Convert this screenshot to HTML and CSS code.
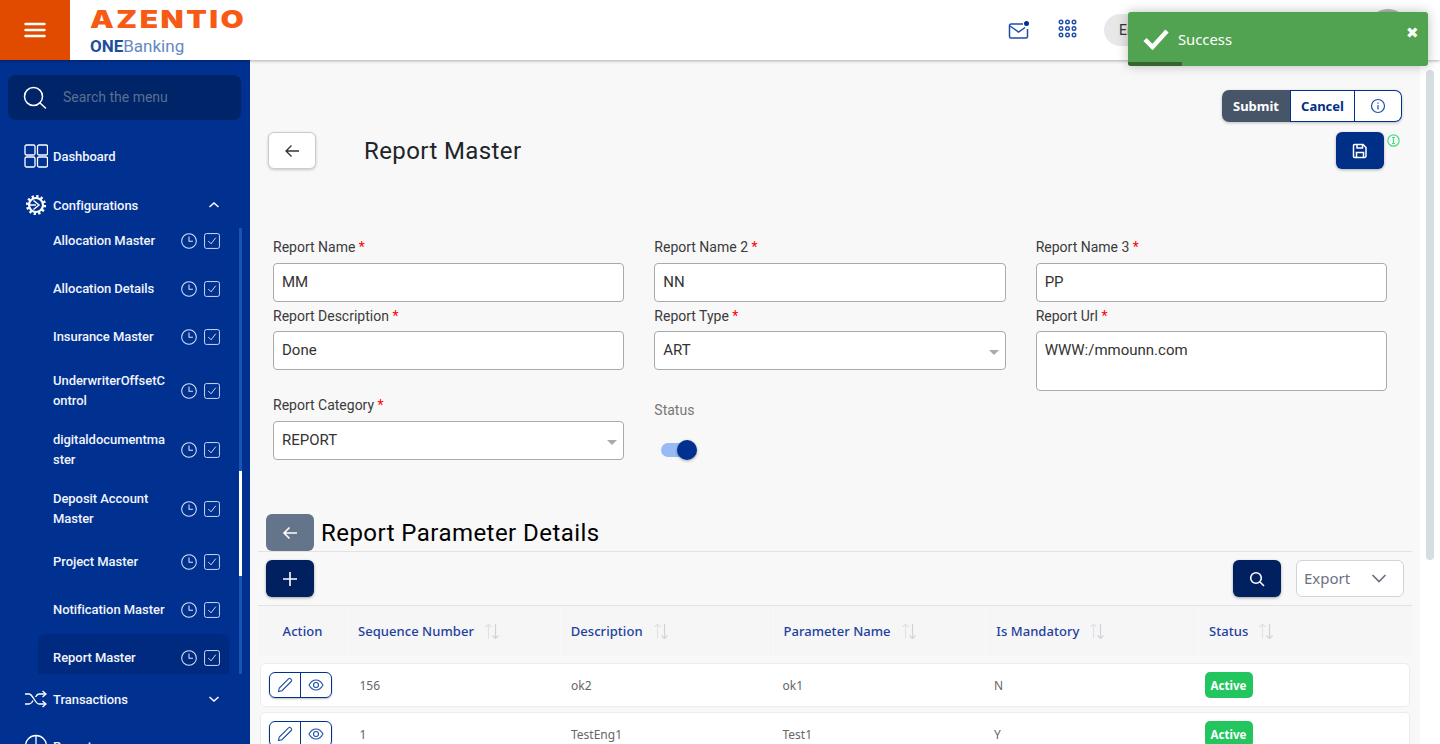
FILE: index.html
```html
<!DOCTYPE html>
<html lang="en">
<head>
  <meta charset="UTF-8">
  <meta name="viewport" content="width=device-width, initial-scale=1.0">
  <title>Report Master</title>
  <link rel="stylesheet" href="styles.css">
</head>
<body>
<header class="topbar">
  <button class="menu-btn">
    <svg width="22" height="16" viewBox="0 0 22 16" fill="none" stroke="#fff" stroke-width="2.4" stroke-linecap="round"><path d="M1.5 2h19M1.5 8h19M1.5 14h19"/></svg>
  </button>
  <div class="logo">
    <div class="logo-main">AZENTIO</div>
    <div class="logo-sub"><b>ONE</b>Banking</div>
  </div>
  <div class="top-right">
    <svg class="mail-icon" width="22" height="20" viewBox="0 0 22 20" fill="none" stroke="#1e4ea8" stroke-width="1.5"><path d="M15 4H3a1.5 1.5 0 0 0-1.5 1.5v11A1.5 1.5 0 0 0 3 18h15a1.5 1.5 0 0 0 1.5-1.5V9"/><path d="M2 6l8.500 6L17 7.500"/><circle cx="18.500" cy="3.500" r="2.500" fill="#003090" stroke="none"/></svg>
    <svg class="apps-icon" width="19" height="19" viewBox="0 0 19 19" fill="none" stroke="#1e4ea8" stroke-width="1.4"><circle cx="3" cy="3" r="1.800"/><circle cx="9.500" cy="3" r="1.800"/><circle cx="16" cy="3" r="1.800"/><circle cx="3" cy="9.500" r="1.800"/><circle cx="9.500" cy="9.500" r="1.800"/><circle cx="16" cy="9.500" r="1.800"/><circle cx="3" cy="16" r="1.800"/><circle cx="9.500" cy="16" r="1.800"/><circle cx="16" cy="16" r="1.800"/></svg>
    <div class="lang-pill">English</div>
    <div class="avatar"></div>
  </div>
</header>

<div class="toast">
  <svg width="26" height="22" viewBox="0 0 26 22" fill="none" stroke="#fff" stroke-width="4.500"><path d="M2 11.500l7.500 7.500L24 3"/></svg>
  <span class="toast-text">Success</span>
  <span class="toast-close">&#10006;</span>
  <div class="toast-progress"></div>
</div>

<div class="layout">
  <aside class="sidebar">
    <div class="menu-search">
      <svg width="24" height="24" viewBox="0 0 24 24" fill="none" stroke="#fff" stroke-width="1.500" stroke-linecap="round"><circle cx="10.500" cy="10.500" r="9"/><path d="M17 17l5.500 5"/></svg>
      <span>Search the menu</span>
    </div>

    <a class="nav-item nav-dashboard">
      <svg width="24" height="24" viewBox="0 0 24 24" fill="none" stroke="#fff" stroke-width="1.300"><rect x="1" y="1" width="10" height="10" rx="1.500"/><rect x="13.500" y="1" width="10" height="10" rx="1.500"/><rect x="1" y="13" width="10" height="10" rx="1.500"/><rect x="13.500" y="13" width="10" height="10" rx="1.500"/></svg>
      <span>Dashboard</span>
    </a>
    <a class="nav-item nav-config">
      <svg width="24" height="24" viewBox="0 0 24 24" fill="none" stroke="#fff"><circle cx="12" cy="12" r="7" stroke-width="2.200"/><circle cx="12" cy="12" r="8.800" stroke-width="2.600" stroke-dasharray="2.300 2.300"/><path d="M9.500 7.500l5.500 4.500-5.500 4.500M12 12H6" stroke-width="1.500"/></svg>
      <span>Configurations</span>
      <svg class="chev" width="12" height="8" viewBox="0 0 12 8" fill="none" stroke="#fff" stroke-width="1.500"><path d="M1.500 6L6 2l4.500 4"/></svg>
    </a>

    <div class="submenu">
      <ul class="submenu-list">
        <li class="sub-item"><span class="sub-name">Allocation Master</span><svg class="clock"><use href="#clock"/></svg><svg class="tick"><use href="#tick"/></svg></li>
        <li class="sub-item"><span class="sub-name">Allocation Details</span><svg class="clock"><use href="#clock"/></svg><svg class="tick"><use href="#tick"/></svg></li>
        <li class="sub-item"><span class="sub-name">Insurance Master</span><svg class="clock"><use href="#clock"/></svg><svg class="tick"><use href="#tick"/></svg></li>
        <li class="sub-item tall"><span class="sub-name">UnderwriterOffsetControl</span><svg class="clock"><use href="#clock"/></svg><svg class="tick"><use href="#tick"/></svg></li>
        <li class="sub-item tall"><span class="sub-name">digitaldocumentmaster</span><svg class="clock"><use href="#clock"/></svg><svg class="tick"><use href="#tick"/></svg></li>
        <li class="sub-item tall"><span class="sub-name keep">Deposit Account Master</span><svg class="clock"><use href="#clock"/></svg><svg class="tick"><use href="#tick"/></svg></li>
        <li class="sub-item"><span class="sub-name">Project Master</span><svg class="clock"><use href="#clock"/></svg><svg class="tick"><use href="#tick"/></svg></li>
        <li class="sub-item"><span class="sub-name">Notification Master</span><svg class="clock"><use href="#clock"/></svg><svg class="tick"><use href="#tick"/></svg></li>
        <li class="sub-item active"><span class="sub-name">Report Master</span><svg class="clock"><use href="#clock"/></svg><svg class="tick"><use href="#tick"/></svg></li>
      </ul>
      <div class="sub-scroll"><div class="sub-thumb"></div></div>
    </div>

    <a class="nav-item nav-trans">
      <svg width="24" height="18" viewBox="0 0 24 18" fill="none" stroke="#fff" stroke-width="1.300"><path d="M1 4h4c4 0 6 10 10 10h6M1 14h4c1.800 0 3-1.600 4.200-3.500M11.500 7C12.500 5.300 13.500 4 15 4h6"/><path d="M18.500 1L22 4l-3.500 3M18.500 11l3.500 3-3.500 3"/></svg>
      <span>Transactions</span>
      <svg class="chev" width="12" height="8" viewBox="0 0 12 8" fill="none" stroke="#fff" stroke-width="1.500"><path d="M1.500 2L6 6l4.500-4"/></svg>
    </a>
    <a class="nav-item nav-reports">
      <svg width="24" height="24" viewBox="0 0 24 24" fill="none" stroke="#fff" stroke-width="1.300"><circle cx="12" cy="12" r="10.500"/><path d="M12 1.500V12H2M12 12h10"/></svg>
      <span>Reports</span>
    </a>
  </aside>

  <main class="content">
    <div class="action-group-row">
      <div class="action-group">
        <button class="btn-submit">Submit</button>
        <button class="btn-cancel">Cancel</button>
        <button class="btn-info">
          <svg width="16" height="16" viewBox="0 0 16 16" fill="none" stroke="#1e4ea8" stroke-width="1.200"><circle cx="8" cy="8" r="6.500"/><path d="M8 7v4.500M8 4.500v1.200"/></svg>
        </button>
      </div>
    </div>

    <div class="page-head">
      <button class="back-btn">
        <svg width="16" height="14" viewBox="0 0 16 14" fill="none" stroke="#333" stroke-width="1.300"><path d="M15 7H2M7.500 1.500L2 7l5.500 5.500"/></svg>
      </button>
      <h1 class="page-title">Report Master</h1>
      <button class="save-btn">
        <svg width="16" height="16" viewBox="0 0 16 16" fill="none" stroke="#fff" stroke-width="1.500"><path d="M2.500 1.500h8.500l3 3v8.500a1.500 1.500 0 0 1-1.500 1.500h-10a1 1 0 0 1-1-1V2.500a1 1 0 0 1 1-1z"/><path d="M5 1.500v3.500h5.500V1.500M4.500 14.500V9.500h7v5"/></svg>
      </button>
      <svg class="save-hint" width="13" height="13" viewBox="0 0 13 13" fill="none" stroke="#4ade80" stroke-width="1.200"><circle cx="6.500" cy="6.500" r="5.700"/><path d="M6.500 3.500v6M5 3.500h3M5 9.500h3"/></svg>
    </div>

    <form class="report-form">
      <div class="field">
        <label>Report Name <i>*</i></label>
        <input class="text-input" value="MM">
      </div>
      <div class="field">
        <label>Report Name 2 <i>*</i></label>
        <input class="text-input" value="NN">
      </div>
      <div class="field">
        <label>Report Name 3 <i>*</i></label>
        <input class="text-input" value="PP">
      </div>
      <div class="field tight">
        <label>Report Description <i>*</i></label>
        <input class="text-input" value="Done">
      </div>
      <div class="field tight">
        <label>Report Type <i>*</i></label>
        <div class="select-box">ART<span class="caret"></span></div>
      </div>
      <div class="field tight">
        <label>Report Url <i>*</i></label>
        <textarea class="text-input url-input">WWW:/mmounn.com</textarea>
      </div>
      <div class="field">
        <label>Report Category <i>*</i></label>
        <div class="select-box">REPORT<span class="caret"></span></div>
      </div>
      <div class="field status-field">
        <label>Status</label>
        <div class="toggle"><span class="toggle-knob"></span></div>
      </div>
    </form>

    <section class="param-section">
      <div class="section-head">
        <button class="section-back">
          <svg width="16" height="14" viewBox="0 0 16 14" fill="none" stroke="#fff" stroke-width="1.600"><path d="M15 7H2M7.500 1.500L2 7l5.500 5.500"/></svg>
        </button>
        <h2 class="section-title">Report Parameter Details</h2>
      </div>
      <div class="toolbar">
        <button class="navy-btn">
          <svg width="14" height="14" viewBox="0 0 14 14" fill="none" stroke="#fff" stroke-width="1.600"><path d="M7 0v14M0 7h14"/></svg>
        </button>
        <button class="navy-btn search-btn">
          <svg width="16" height="16" viewBox="0 0 16 16" fill="none" stroke="#fff" stroke-width="1.600"><circle cx="7" cy="7" r="5.300"/><path d="M11 11l4 4"/></svg>
        </button>
        <div class="export-select"><span>Export</span>
          <svg width="16" height="9" viewBox="0 0 16 9" fill="none" stroke="#6b7280" stroke-width="1.700"><path d="M1.500 1L8 7.500 14.500 1"/></svg>
        </div>
      </div>

      <div class="table-head">
        <div class="th th-action">Action</div>
        <div class="th">Sequence Number<svg class="sort"><use href="#sort"/></svg></div>
        <div class="th">Description<svg class="sort"><use href="#sort"/></svg></div>
        <div class="th">Parameter Name<svg class="sort"><use href="#sort"/></svg></div>
        <div class="th">Is Mandatory<svg class="sort"><use href="#sort"/></svg></div>
        <div class="th">Status<svg class="sort"><use href="#sort"/></svg></div>
      </div>

      <div class="table-row">
        <div class="row-actions">
          <button><svg class="icon-pen"><use href="#pen"/></svg></button>
          <button><svg class="icon-eye"><use href="#eye"/></svg></button>
        </div>
        <div class="td">156</div>
        <div class="td">ok2</div>
        <div class="td">ok1</div>
        <div class="td">N</div>
        <div class="td"><span class="badge">Active</span></div>
      </div>
      <div class="table-row">
        <div class="row-actions">
          <button><svg class="icon-pen"><use href="#pen"/></svg></button>
          <button><svg class="icon-eye"><use href="#eye"/></svg></button>
        </div>
        <div class="td">1</div>
        <div class="td">TestEng1</div>
        <div class="td">Test1</div>
        <div class="td">Y</div>
        <div class="td"><span class="badge">Active</span></div>
      </div>
    </section>
  </main>

  <div class="page-scroll"><div class="page-thumb"></div></div>
</div>

<svg class="icon-defs" width="0" height="0">
  <symbol id="clock" viewBox="0 0 17 17"><g fill="none" stroke="#dbe4f5" stroke-width="1.100"><circle cx="8.500" cy="8.500" r="7.800"/><path d="M8.500 3.800v5h4.200"/></g></symbol>
  <symbol id="tick" viewBox="0 0 17 17"><g fill="none" stroke="#dbe4f5" stroke-width="1"><rect x=".6" y=".6" width="15.800" height="15.800" rx="2"/><path d="M4.500 8.500l3 3 5-6.500"/></g></symbol>
  <symbol id="sort" viewBox="0 0 16 16"><g fill="none" stroke-width="1.200"><path d="M4.500 15.500V1M1.500 4l3-3 3 3" stroke="#dfe3e8"/><path d="M11.500 1v14.500M8.500 12.500l3 3 3-3" stroke="#cfd4da"/></g></symbol>
  <symbol id="pen" viewBox="0 0 16 16"><g fill="none" stroke="#1e4ea8" stroke-width="1.100"><path d="M1.500 14.500l.8-3.500L11.500 1.800a1.500 1.500 0 0 1 2.200 0l.5.500a1.500 1.500 0 0 1 0 2.200L5 13.700z"/></g></symbol>
  <symbol id="eye" viewBox="0 0 16 12"><g fill="none" stroke="#1e4ea8" stroke-width="1.100"><path d="M1 6c1.800-3.200 4.200-5 7-5s5.200 1.800 7 5c-1.800 3.200-4.200 5-7 5S2.800 9.200 1 6z"/><circle cx="8" cy="6" r="2.500"/></g></symbol>
</svg>
</body>
</html>
```

FILE: styles.css
```css
* { margin: 0; padding: 0; box-sizing: border-box; }
html, body { height: 744px; overflow: hidden; }
body {
  font-family: Roboto, 'Noto Sans', sans-serif;
  background: #f8f8f8;
  color: #333;
}
button { border: none; background: none; font-family: inherit; cursor: pointer; }
ul { list-style: none; }
.icon-defs { position: absolute; }

/* top bar */
.topbar {
  display: flex;
  align-items: center;
  height: 60px;
  background: #fff;
  box-shadow: 0 1px 3px rgba(0, 0, 0, 0.3);
  position: relative;
  z-index: 2;
}
.menu-btn {
  width: 70px;
  height: 60px;
  background: #e04b00;
  display: flex;
  align-items: center;
  justify-content: center;
}
.logo { align-self: flex-start; margin: 8px 0 0 20px; width: 170px; }
.logo-main {
  font-family: Inter, sans-serif;
  font-weight: 900;
  font-size: 24px;
  line-height: 24px;
  letter-spacing: 2px;
  color: #f75a14;
  transform: scaleX(1.25);
  transform-origin: left center;
}
.logo-sub {
  font-size: 17px;
  line-height: 18px;
  margin-top: 5px;
  color: #6388c4;
}
.logo-sub b { color: #1d4e9e; font-weight: 700; }
.top-right {
  margin-left: auto;
  display: flex;
  align-items: center;
  padding-right: 31px;
}
.mail-icon { margin-right: 28px; }
.apps-icon { margin-right: 27px; margin-top: -4px; }
.lang-pill {
  width: 240px;
  height: 32px;
  border-radius: 16px;
  background: #e8e8e8;
  font-size: 14px;
  line-height: 32px;
  padding-left: 15px;
  margin-right: 23px;
}
.avatar {
  width: 42px;
  height: 42px;
  border-radius: 50%;
  background: #b5b5b5;
}

/* toast */
.toast {
  position: absolute;
  top: 12px;
  left: 1128px;
  width: 300px;
  height: 54px;
  z-index: 5;
  background: #51a351;
  border-radius: 3px;
  box-shadow: 0 0 12px rgba(0, 0, 0, 0.25);
  color: #fff;
  display: flex;
  align-items: center;
  padding: 0 0 0 15px;
  overflow: hidden;
}
.toast-text { font-family: 'Noto Sans', sans-serif; font-size: 14.800px; margin-left: 9px; }
.toast-close { position: absolute; top: 13px; right: 9px; font-size: 15px; line-height: 16px; }
.toast-progress {
  position: absolute;
  left: 0;
  bottom: 0;
  width: 54px;
  height: 4px;
  background: #35662f;
}

/* sidebar */
.layout { display: flex; height: 684px; position: relative; }
.sidebar {
  width: 250px;
  flex-shrink: 0;
  background: #003090;
  overflow: hidden;
  color: #fff;
  padding-top: 15px;
}
.menu-search {
  display: flex;
  align-items: center;
  height: 45px;
  margin: 0 9px 0 8px;
  padding-left: 15px;
  background: #002468;
  border-radius: 8px;
}
.menu-search span { margin: 0 0 2px 16px; font-size: 14px; color: #5c6f8f; }
.nav-item {
  display: flex;
  align-items: center;
  font-size: 13px;
  font-weight: 500;
  letter-spacing: -0.05px;
  color: #f1f4fb;
  padding-left: 24px;
}
.nav-item span { margin-left: 5px; }
.nav-item svg:first-child { width: 24px; flex-shrink: 0; }
.nav-item .chev { margin-left: auto; margin-right: 30px; }
.nav-dashboard { height: 24px; margin-top: 24px; }
.nav-config { height: 24px; margin-top: 25px; }
.nav-trans { height: 24px; margin-top: 13px; }
.nav-reports { height: 24px; margin-top: 23px; }
.submenu {
  position: relative;
  height: 446px;
  margin-top: 11px;
  overflow: hidden;
}
.submenu-list { margin-top: -11px; }
.sub-item {
  display: flex;
  align-items: center;
  width: 191px;
  height: 48px;
  margin-left: 38px;
  padding-left: 15px;
  border-radius: 8px;
  font-size: 13px;
  font-weight: 500;
  letter-spacing: -0.05px;
  line-height: 20px;
  color: #f1f4fb;
}
.sub-item.tall { height: 59px; }
.sub-item.active { background: #002a80; }
.sub-name { width: 115px; word-break: break-all; flex-shrink: 0; }
.sub-name.keep { word-break: normal; }
.clock { width: 16px; height: 16px; margin: 0 7px 0 13px; }
.tick { width: 16px; height: 16px; }
.sub-scroll {
  position: absolute;
  top: 0;
  bottom: 0;
  left: 239px;
  width: 3px;
  background: #1a52b5;
}
.sub-thumb { height: 105px; margin-top: 243px; background: #fff; }

/* main area */
.content { flex: 1; min-width: 0; height: 684px; overflow: hidden; }
.action-group-row { display: flex; justify-content: flex-end; padding: 30px 18px 0 0; }
.action-group {
  display: flex;
  height: 32px;
  border-radius: 7px;
  box-shadow: 0 1px 3px rgba(0, 0, 0, 0.25);
  font-family: 'Noto Sans', sans-serif;
  font-size: 13px;
  font-weight: 700;
}
.action-group button { font: inherit; }
.btn-submit { width: 68px; background: #475569; color: #fff; border-radius: 7px 0 0 7px; }
.btn-cancel { width: 65px; background: #fff; color: #002f87; border: 1px solid #003090; }
.btn-info {
  width: 47px;
  background: #fff;
  border: 1px solid #003090;
  border-left: none;
  border-radius: 0 7px 7px 0;
  display: flex;
  align-items: center;
  justify-content: center;
}
.page-head {
  display: flex;
  align-items: flex-start;
  margin-top: 10px;
  padding: 0 20px 0 18px;
  height: 37px;
}
.back-btn {
  width: 48px;
  height: 37px;
  background: #fff;
  border: 1px solid #c9ccd1;
  border-radius: 6px;
  box-shadow: 0 1px 3px rgba(0, 0, 0, 0.2);
  display: flex;
  align-items: center;
  justify-content: center;
}
.page-title {
  margin-left: 48px;
  font-size: 24px;
  font-weight: 400;
  line-height: 39px;
  letter-spacing: 0.4px;
  color: #212529;
}
.save-btn {
  margin-left: auto;
  width: 48px;
  height: 37px;
  background: #002f87;
  border-radius: 6px;
  box-shadow: 0 1px 3px rgba(0, 0, 0, 0.3);
  display: flex;
  align-items: center;
  justify-content: center;
}
.save-hint { margin-left: 3px; margin-top: 2px; }

/* form */
.report-form {
  display: grid;
  grid-template-columns: repeat(3, 351.330px);
  column-gap: 30px;
  row-gap: 4px;
  margin: 68px 0 0 23px;
  align-items: start;
}
.field label {
  display: block;
  font-size: 14px;
  line-height: 20px;
  margin-bottom: 6px;
  color: #3b3b3b;
}
.field.tight label { margin-bottom: 5px; }
.field label i { font-style: normal; color: #f00; }
.text-input, .select-box {
  display: block;
  width: 100%;
  height: 39px;
  padding: 0 8px;
  background: #fff;
  border: 1px solid #aaa;
  border-radius: 4px;
  font-family: Roboto, sans-serif;
  font-size: 15px;
  line-height: 37px;
  color: #333;
  position: relative;
}
input.text-input { padding-bottom: 2px; }
.url-input { height: 60px; line-height: 20px; padding-top: 8px; resize: none; }
.caret {
  position: absolute;
  right: 6px;
  top: 18px;
  border-left: 5px solid transparent;
  border-right: 5px solid transparent;
  border-top: 5px solid #aaa;
}
.status-field label { margin: 5px 0 0; color: #777; }
.toggle {
  position: relative;
  width: 34px;
  height: 14px;
  margin: 23px 0 0 7px;
  background: #99bbf5;
  border-radius: 7px;
}
.toggle-knob {
  position: absolute;
  right: -2px;
  top: -3px;
  width: 20px;
  height: 20px;
  border-radius: 50%;
  background: #003090;
  box-shadow: 0 1px 3px rgba(0, 0, 0, 0.35);
}

/* parameter table */
.param-section { margin: 54px 8px 0; }
.section-head {
  display: flex;
  height: 38px;
  padding-left: 8px;
  border-bottom: 1px solid #e2e2e2;
}
.section-back {
  width: 48px;
  height: 37px;
  background: #64748b;
  border-radius: 6px;
  display: flex;
  align-items: center;
  justify-content: center;
}
.section-title {
  margin-left: 7px;
  font-size: 24px;
  font-weight: 400;
  line-height: 38px;
  letter-spacing: 0.45px;
  color: #000;
}
.toolbar {
  display: flex;
  align-items: flex-start;
  height: 54px;
  padding: 8px 8px 0;
  border-bottom: 1px solid #e2e2e2;
}
.navy-btn {
  width: 48px;
  height: 37px;
  background: #002060;
  border-radius: 6px;
  box-shadow: 0 1px 3px rgba(0, 0, 0, 0.35);
  display: flex;
  align-items: center;
  justify-content: center;
}
.search-btn { margin-left: auto; }
.export-select {
  display: flex;
  align-items: center;
  justify-content: space-between;
  width: 108px;
  height: 37px;
  margin-left: 15px;
  padding: 0 16px 0 7px;
  background: #fff;
  border: 1px solid #cfd4dc;
  border-radius: 6px;
  font-family: 'Noto Sans', sans-serif;
  font-size: 15px;
  color: #6b7280;
}
.export-select span { margin-bottom: 2px; }
.table-head {
  display: grid;
  grid-template-columns: 89px repeat(5, 212.750px);
  height: 50px;
  background: #f6f6f6;
  font-family: 'Noto Sans', sans-serif;
  font-size: 13px;
  font-weight: 500;
  letter-spacing: 0.05px;
  color: #1e40a0;
}
.th {
  display: flex;
  align-items: center;
  padding-left: 10px;
  border-left: 1px solid #f9f9f9;
}
.th-action { justify-content: center; padding: 0; border: none; }
.sort { width: 16px; height: 16px; margin-left: 10px; }
.table-row {
  display: grid;
  grid-template-columns: 88.500px repeat(5, 211.500px);
  align-items: center;
  height: 44px;
  margin: 7px 2px 0;
  background: #fff;
  border: 1px solid #ececec;
  border-radius: 5px;
  font-family: 'Noto Sans', sans-serif;
  font-size: 12px;
  color: #666;
}
.table-row + .table-row { margin-top: 5px; }
.row-actions {
  display: flex;
  width: 63px;
  height: 26px;
  margin-left: 8px;
  border: 1px solid #003090;
  border-radius: 6px;
  box-shadow: 0 1px 2px rgba(0, 0, 0, 0.25);
}
.row-actions button {
  flex: 1;
  display: flex;
  align-items: center;
  justify-content: center;
}
.row-actions button + button { border-left: 1px solid #003090; }
.icon-pen { width: 16px; height: 16px; }
.icon-eye { width: 16px; height: 12px; }
.td { padding-left: 10px; }
.badge {
  display: inline-block;
  width: 48px;
  height: 26px;
  margin-left: -1px;
  background: #22c55e;
  border-radius: 5px;
  color: #fff;
  font-size: 11.500px;
  font-weight: 700;
  line-height: 27px;
  text-align: center;
}
.page-scroll {
  width: 20px;
  flex-shrink: 0;
  background: #fff;
  padding: 10px 6px 0;
}
.page-thumb {
  height: 490px;
  background: #d5dde1;
  border-radius: 4px;
}
```
